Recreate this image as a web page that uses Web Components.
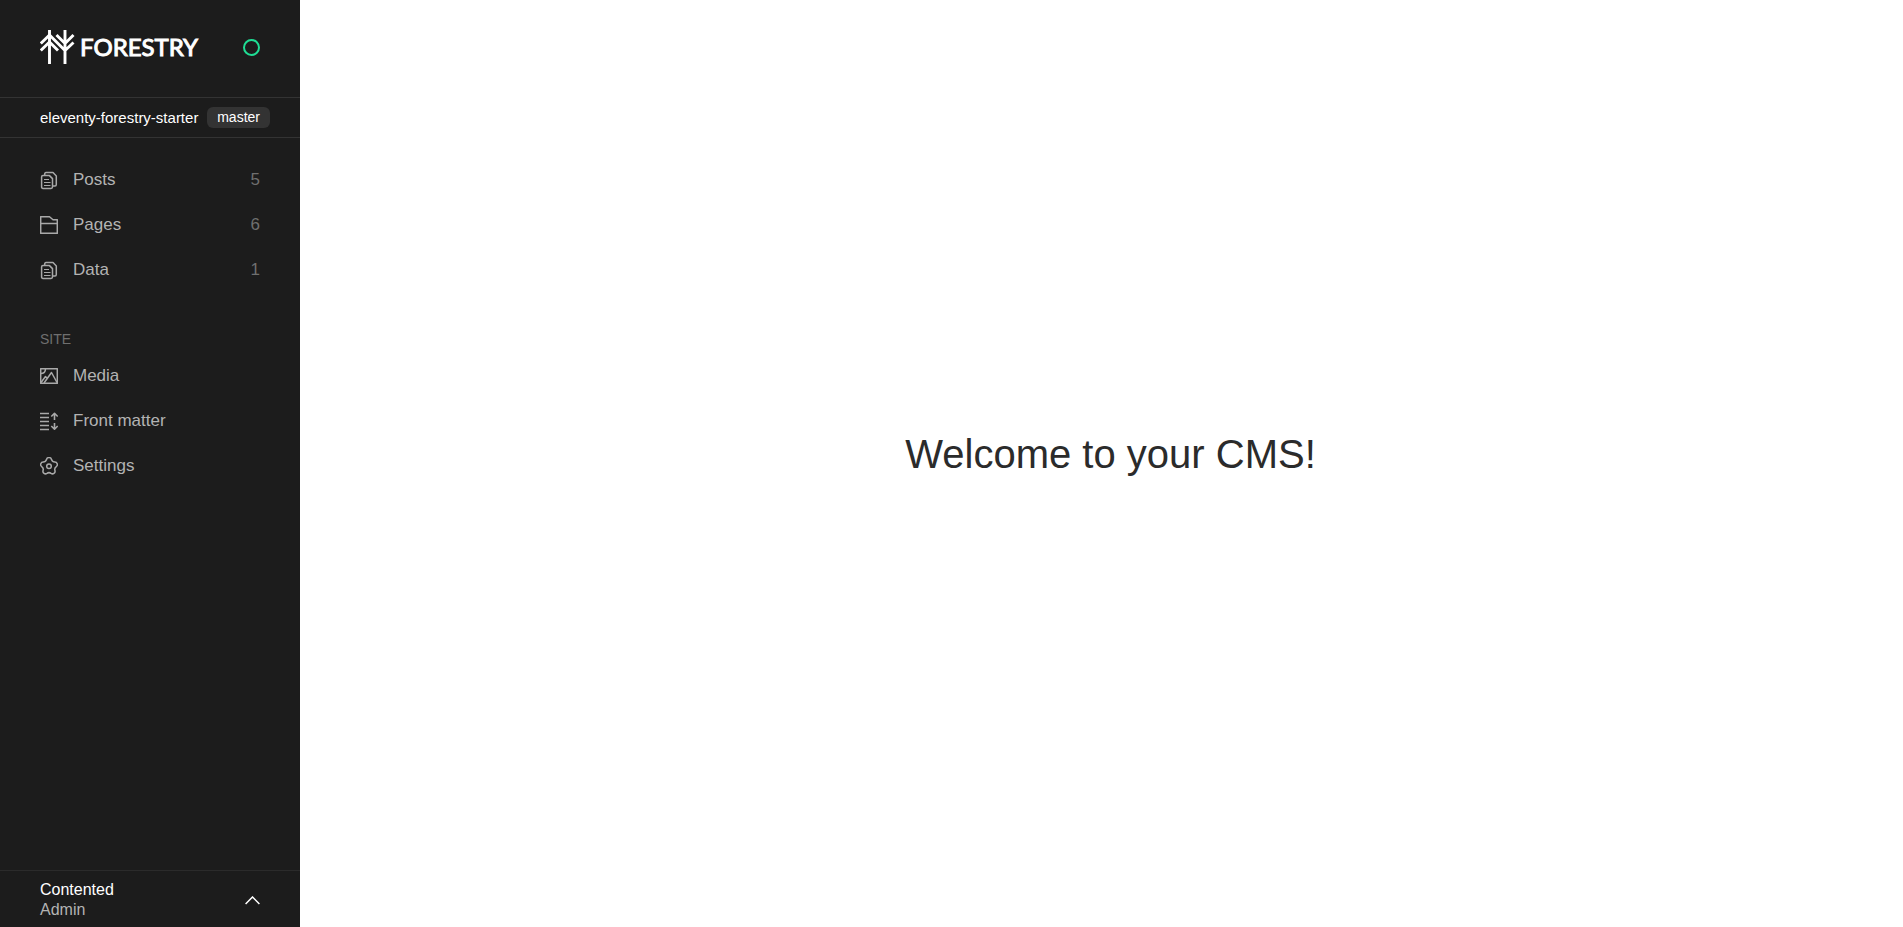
<!DOCTYPE html>
<html lang="en">
<head>
<meta charset="utf-8">
<meta name="viewport" content="width=device-width, initial-scale=1">
<title>Forestry CMS</title>
<style>
  html, body { height: 100%; }
  body { margin: 0; background: #fff; font-family: "Liberation Sans", Arial, sans-serif; }
</style>
</head>
<body>
<cms-app>
  <cms-sidebar slot="sidebar">
    <cms-brand slot="brand"></cms-brand>
    <cms-repo slot="repo" branch="master">eleventy-forestry-starter</cms-repo>
    <cms-nav slot="nav" label="Content">
      <cms-nav-item icon="docs" count="5">Posts</cms-nav-item>
      <cms-nav-item icon="folder" count="6">Pages</cms-nav-item>
      <cms-nav-item icon="docs" count="1">Data</cms-nav-item>
    </cms-nav>
    <cms-nav slot="nav" heading="SITE" label="Site">
      <cms-nav-item icon="media">Media</cms-nav-item>
      <cms-nav-item icon="matter">Front matter</cms-nav-item>
      <cms-nav-item icon="settings">Settings</cms-nav-item>
    </cms-nav>
    <cms-account slot="account" role-name="Admin">Contented</cms-account>
  </cms-sidebar>
  <cms-welcome>Welcome to your CMS!</cms-welcome>
</cms-app>

<script>
const ICONS = {
  docs: '<path d="M4.700 4V3Q4.700 1.600 6 1.600H13L16.300 5V13.500Q16.300 15 15 15H13"/><path d="M3 4.600H9.500L12.500 7.600V16Q12.500 17.400 11 17.400H3Q1.600 17.400 1.600 16V6Q1.600 4.600 3 4.600Z"/><path stroke-width="1.200" d="M4 8.500H9M4 11.500H10.500M4 14.500H10.500"/>',
  folder: '<path d="M.700 .700H9.500L13 3.700H17.300V17.300H.700ZM.700 7.500H17.300"/>',
  media: '<path d="M.700 1.700H17.300V16.300H.700Z"/><path d="M.700 6.500Q5.500 6.500 5.500 1.700M1 15.500L5.500 9.500L7.500 12M4 16L11.500 5.500L17 15.500"/>',
  matter: '<path d="M0 1.500H9M0 5.500H9M0 9.500H9M0 13.500H9M0 17.500H9"/><path stroke-width="1.600" d="M14.500 8V1.500M11.300 4.500L14.500 1.300L17.700 4.500M14.500 11V17M11.300 14L14.500 17.200L17.700 14"/>',
  settings: '<circle cx="9" cy="9.300" r="2.300"/><path d="M6.500 2.600A2.550 2.550 0 0 1 11.500 2.600A3.500 3.500 0 0 0 14.800 5A2.550 2.550 0 0 1 16.300 9.600A3.500 3.500 0 0 0 15 13.700A2.550 2.550 0 0 1 11.100 16.400A3.500 3.500 0 0 0 6.900 16.400A2.550 2.550 0 0 1 3 13.700A3.500 3.500 0 0 0 1.700 9.600A2.550 2.550 0 0 1 3.200 5A3.500 3.500 0 0 0 6.500 2.600Z"/>'
};

function define(name, render) {
  customElements.define(name, class extends HTMLElement {
    constructor() {
      super();
      this.attachShadow({ mode: 'open' });
    }
    connectedCallback() {
      this.shadowRoot.innerHTML = '<style>:host,*{box-sizing:border-box}</style>' + render(this);
    }
  });
}

define('cms-app', () => `
  <style>
    :host { display: grid; grid-template-columns: 300px 1fr; min-height: 100vh; }
    main { display: grid; place-items: center; padding: 0 0 20px 18px; }
  </style>
  <slot name="sidebar"></slot>
  <main><slot></slot></main>`);

define('cms-sidebar', () => `
  <style>
    :host { display: flex; flex-direction: column; background: #1c1c1c; color: #fff; }
    .nav { flex: 1; display: flex; flex-direction: column; gap: 39px; padding: 19px 40px; }
  </style>
  <slot name="brand"></slot>
  <slot name="repo"></slot>
  <div class="nav"><slot name="nav"></slot></div>
  <slot name="account"></slot>`);

define('cms-brand', () => `
  <style>
    :host { display: flex; align-items: center; justify-content: space-between; height: 97px; padding: 0 40px 3px; }
    a { display: flex; align-items: center; gap: 5px; color: #fff; text-decoration: none;
        font: 400 24px/28px Lato, sans-serif; -webkit-text-stroke: 1px #fff; }
    svg { display: block; }
    .status { width: 17px; height: 17px; border: 2px solid #1fdd94; border-radius: 50%; }
  </style>
  <a href="#" aria-label="Forestry home">
    <svg width="35" height="34" viewBox="0 0 35 34" fill="none" stroke="currentColor" stroke-width="2.9" aria-hidden="true">
      <path d="M9.500 0V34M25 0V34M.8 13.500L9.500 5L25 20.500L33.500 12.500M.8 20.500L9.500 12L18 20.500M16.500 5L25 13.500L33.500 5"/>
    </svg>
    <span>FORESTRY</span>
  </a>
  <span class="status" role="img" aria-label="Connected"></span>`);

define('cms-repo', el => `
  <style>
    :host { display: flex; align-items: center; justify-content: space-between; height: 41px;
      padding: 0 30px 0 40px; border: solid #333; border-width: 1px 0; font-size: 15px; line-height: 20px; }
    a { color: #fff; text-decoration: none; }
    .branch { padding: 0 10px; border-radius: 6px; background: #333; font-size: 14px; line-height: 21px; }
  </style>
  <a href="#"><slot></slot></a>
  <span class="branch">${el.getAttribute('branch')}</span>`);

define('cms-nav', el => `
  <style>
    :host { display: block; }
    h2 { margin: 0; font-size: 14px; line-height: 16px; font-weight: 400; color: #6f6f6f; padding-bottom: 6px; }
  </style>
  <nav aria-label="${el.getAttribute('label')}">
    ${el.hasAttribute('heading') ? `<h2>${el.getAttribute('heading')}</h2>` : ''}
    <slot></slot>
  </nav>`);

define('cms-nav-item', el => `
  <style>
    :host { display: block; }
    a { display: flex; align-items: center; gap: 15px; height: 45px; color: #b3b3b3;
        text-decoration: none; font-size: 17px; line-height: 21px; }
    svg { flex: none; margin-top: 2px; }
    .label { flex: 1; }
    .count { color: #6f6f6f; }
  </style>
  <a href="#">
    <svg width="18" height="19" viewBox="0 0 18 19" fill="none" stroke="#a9a9a9" stroke-width="1.5" stroke-linejoin="round" aria-hidden="true">${ICONS[el.getAttribute('icon')]}</svg>
    <span class="label"><slot></slot></span>
    ${el.hasAttribute('count') ? `<span class="count">${el.getAttribute('count')}</span>` : ''}
  </a>`);

define('cms-account', el => `
  <style>
    :host { display: block; border-top: 1px solid #2b2b2b; }
    button { display: flex; align-items: center; justify-content: space-between; width: 100%; height: 56px;
      margin: 0; padding: 2px 40px 0; border: 0; background: none; color: #fff; text-align: left;
      font: inherit; font-size: 16px; line-height: 20px; cursor: pointer; }
    .who { display: flex; flex-direction: column; }
    .role { color: #b3b3b3; }
  </style>
  <button type="button" aria-label="Account menu">
    <span class="who"><span><slot></slot></span><span class="role">${el.getAttribute('role-name')}</span></span>
    <svg width="15" height="9" viewBox="0 0 15 9" fill="none" stroke="currentColor" stroke-width="1.500" aria-hidden="true"><path d="M.600 8L7.500 1L14.400 8"/></svg>
  </button>`);

define('cms-welcome', () => `
  <style>
    :host { display: block; }
    h1 { margin: 0; font-size: 40px; line-height: 48px; font-weight: 400; color: #2b2b2b; }
  </style>
  <h1><slot></slot></h1>`);
</script>
</body>
</html>
